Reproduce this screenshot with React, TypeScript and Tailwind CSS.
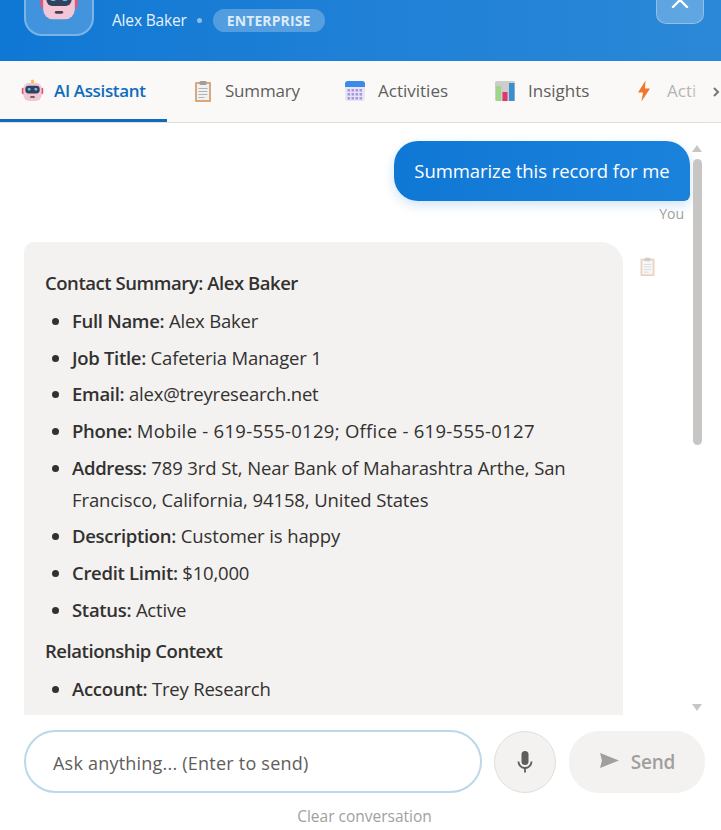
import React from "react";

const font = { fontFamily: '"Open Sans", "Noto Sans", sans-serif' };

function Robot({ size = 24 }: { size?: number }) {
  return (
    <svg width={size} height={size} viewBox="0 0 24 24">
      <rect x="11" y="1.5" width="2" height="3" fill="#c9a227" />
      <circle cx="12" cy="2" r="1.6" fill="#f5c542" />
      <rect x="0.8" y="9" width="3" height="7" rx="1.5" fill="#e0567a" />
      <rect x="20.2" y="9" width="3" height="7" rx="1.5" fill="#e0567a" />
      <rect x="2.5" y="4" width="19" height="19" rx="6" fill="#f3c6d6" />
      <rect x="4.5" y="7" width="15" height="8" rx="3.5" fill="#33415c" />
      <rect x="7" y="9.5" width="3" height="2.5" rx="1" fill="#58c7f3" />
      <rect x="14" y="9.5" width="3" height="2.5" rx="1" fill="#58c7f3" />
      <rect x="9.5" y="18" width="5" height="1.6" rx="0.8" fill="#4a3b52" />
    </svg>
  );
}

function Clipboard({ size = 22 }: { size?: number }) {
  return (
    <svg width={size} height={size} viewBox="0 0 22 22">
      <rect x="3" y="2" width="16" height="20" rx="1" fill="#d9a77c" />
      <rect x="5" y="4" width="12" height="16" fill="#f3f1ee" />
      <rect x="7.5" y="1" width="7" height="4" rx="1" fill="#a19f9d" />
      <rect x="6.5" y="8" width="9" height="1" fill="#a9b5c4" />
      <rect x="6.5" y="11" width="9" height="1" fill="#a9b5c4" />
      <rect x="6.5" y="14" width="9" height="1" fill="#a9b5c4" />
      <rect x="6.5" y="17" width="6" height="1" fill="#a9b5c4" />
    </svg>
  );
}

function Calendar() {
  const cells = [];
  for (let r = 0; r < 3; r++) {
    for (let c = 0; c < 4; c++) {
      cells.push(<rect key={`${r}-${c}`} x={3.5 + c * 4} y={9 + r * 4} width="2.6" height="2.6" fill="#a598dc" />);
    }
  }
  return (
    <svg width="22" height="22" viewBox="0 0 22 22">
      <rect x="1" y="1" width="20" height="20" rx="3" fill="#e9e5f6" />
      <path d="M1 7V4a3 3 0 0 1 3-3h14a3 3 0 0 1 3 3v3z" fill="#3b8ae6" />
      {cells}
    </svg>
  );
}

function Chart() {
  return (
    <svg width="22" height="22" viewBox="0 0 22 22">
      <rect x="1" y="1" width="20" height="20" rx="1.5" fill="#cfcdcb" />
      <rect x="2" y="6" width="5" height="15" fill="#9fd68a" />
      <rect x="8.5" y="12" width="5" height="9" fill="#e0356f" />
      <rect x="15" y="3" width="5.5" height="18" fill="#3a8fd0" />
    </svg>
  );
}

function Bolt() {
  return (
    <svg width="16" height="22" viewBox="0 0 16 22">
      <path d="M9.5 0.5 2 12.5h5L5.5 21.5 14 8.5H9z" fill="#f0782c" />
    </svg>
  );
}

function Tab({ icon, label, active, gap = "gap-3", w, muted, track = "" }: { icon: React.ReactNode; label: string; active?: boolean; gap?: string; w: string; muted?: boolean; track?: string }) {
  return (
    <div className={`${w} h-full shrink-0 flex items-center ${gap} ${active ? "border-b-[3px] border-[#0f6cbd] pt-[1px]" : "pb-[2px]"}`}>
      {icon}
      <span className={`text-[17px] whitespace-nowrap ${track} ${active ? "font-semibold text-[#0f6cbd]" : muted ? "text-[#b5b3b1]" : "text-[#605e5c]"}`}>{label}</span>
    </div>
  );
}

const rows1: [string, string, string][] = [
  ["Full Name:", "Alex Baker", ""],
  ["Job Title:", "Cafeteria Manager 1", ""],
  ["Email:", "alex@treyresearch.net", ""],
  ["Phone:", "Mobile - 619-555-0129; Office - 619-555-0127", "tracking-[0.28px]"],
  ["Address:", "789 3rd St, Near Bank of Maharashtra Arthe, San Francisco, California, 94158, United States", "tracking-[-0.1px]"],
  ["Description:", "Customer is happy", "tracking-[-0.1px]"],
  ["Credit Limit:", "$10,000", ""],
  ["Status:", "Active", ""],
];

function Li({ k, v, t = "" }: { k: string; v: string; t?: string }) {
  return (
    <li className="leading-[32px] mb-[4.7px] marker:text-[#323130]">
      <strong className="font-semibold tracking-[-0.3px]">{k}</strong> <span className={t}>{v}</span>
    </li>
  );
}

export default function App() {
  return (
    <div style={font} className="w-[721px] h-[830px] bg-white flex flex-col overflow-hidden">
      <header className="h-[61px] shrink-0 bg-gradient-to-r from-[#0f78d4] to-[#2b88d8] flex items-end justify-between pl-6 pr-[17px] overflow-hidden">
        <div className="flex items-center gap-[18px] mb-[25px]">
          <div className="w-[70px] h-[70px] shrink-0 rounded-[18px] bg-white/20 border-2 border-white/30 flex items-center justify-center">
            <Robot size={40} />
          </div>
          <div className="flex items-center gap-[10px] mt-[39px] text-white">
            <span className="text-[15.5px] text-[#e6f2fb] tracking-[-0.18px]">Alex Baker</span>
            <span className="w-[5px] h-[5px] rounded-full bg-white/50" />
            <span className="h-[23px] w-[112px] rounded-full bg-white/25 text-[14px] font-bold text-[#dcecf9] flex items-center justify-center ml-[1px] tracking-[0.1px]">ENTERPRISE</span>
          </div>
        </div>
        <div className="w-12 h-12 mb-[37px] rounded-[10px] bg-white/25 border border-white/30 flex items-center justify-center">
          <svg width="20" height="20" viewBox="0 0 20 20">
            <path d="M3 3l14 14M17 3L3 17" stroke="#fff" strokeWidth="2.4" strokeLinecap="round" />
          </svg>
        </div>
      </header>

      <nav className="h-[62px] shrink-0 bg-[#faf9f8] border-b border-[#e1dfdd] flex items-center pl-0 relative overflow-hidden">
        <Tab active w="w-[167px] pl-[21px]" gap="gap-[10px]" track="tracking-[-0.35px]" icon={<Robot size={23} />} label="AI Assistant" />
        <Tab w="w-[153px] pl-[25px]" gap="gap-[11px]" track="tracking-[-0.2px]" icon={<Clipboard />} label="Summary" />
        <Tab w="w-[149px] pl-[24px]" icon={<Calendar />} label="Activities" />
        <Tab w="w-[144px] pl-[25px]" icon={<Chart />} label="Insights" />
        <Tab w="w-[90px] pl-[23px]" gap="gap-[15px]" muted icon={<Bolt />} label="Acti" />
        <div className="absolute right-0 top-0 h-full w-[34px] flex items-center justify-end bg-gradient-to-r from-[#faf9f8]/0 to-[#faf9f8] pr-[1px]">
          <svg width="8" height="10" viewBox="0 0 8 10"><path d="M2 1l4 4-4 4" fill="none" stroke="#797775" strokeWidth="2" /></svg>
        </div>
      </nav>

      <main className="h-[592px] shrink-0 flex overflow-hidden">
        <div className="w-[692px] shrink-0 pl-6 pr-[2px] pt-[18px]">
          <div className="flex flex-col items-end">
            <div className="w-[296px] h-[60px] rounded-[24px] rounded-br-[6px] bg-gradient-to-r from-[#0f78d4] to-[#1b82dc] shadow-[0_4px_12px_rgba(15,120,212,0.2)] text-white text-[18.5px] flex items-center justify-center tracking-[-0.07px]">
              Summarize this record for me
            </div>
            <div className="text-[14px] text-[#a19f9d] mt-[3px] mr-[6px] leading-[20px]">You</div>
          </div>
          <div className="flex mt-[18px]">
            <div className="w-[599px] shrink-0 bg-[#f3f2f1] rounded-tl-[10px] rounded-tr-[22px] pl-[21px] pr-5 pt-[25px] text-[18.5px] text-[#323130] tracking-[-0.2px] h-[520px] overflow-hidden">
              <p className="font-semibold leading-[32px] mb-[6px] tracking-[-0.45px]">Contact Summary: Alex Baker</p>
              <ul className="list-disc pl-[27px]">
                {rows1.map(([k, v, t]) => <Li key={k} k={k} v={v} t={t} />)}
              </ul>
              <p className="font-semibold leading-[32px] mb-[6px] mt-[9px] tracking-[-0.45px]">Relationship Context</p>
              <ul className="list-disc pl-[27px]">
                <Li k="Account:" v="Trey Research" />
              </ul>
            </div>
            <div className="ml-[15px] mt-[15px] opacity-50"><Clipboard size={19} /></div>
          </div>
        </div>
        <div className="w-[12px] shrink-0 flex flex-col items-center pt-[22px] pb-[4px] ml-[-1px]">
          <svg width="10" height="7" viewBox="0 0 10 7"><path d="M5 0l5 7H0z" fill="#c8c6c4" /></svg>
          <div className="w-[9px] h-[286px] mt-[7px] rounded-full bg-[#c8c6c4]" />
          <div className="flex-1" />
          <svg width="10" height="7" viewBox="0 0 10 7"><path d="M0 0h10L5 7z" fill="#c8c6c4" /></svg>
        </div>
      </main>

      <div className="flex items-center pl-6 pr-4 mt-[15px]">
        <div className="w-[458px] h-[63px] shrink-0 rounded-full bg-white border-2 border-[#b9d8ea] pl-[27px] pt-[3px] flex items-center text-[18px] text-[#605e5c] tracking-[0.22px]">
          Ask anything... (Enter to send)
        </div>
        <div className="w-[62px] h-[62px] ml-3 shrink-0 rounded-full bg-[#f3f2f1] border border-[#e1dfdd] flex items-center justify-center">
          <svg width="18" height="24" viewBox="0 0 18 24" fill="#605e5c">
            <rect x="5.5" y="1" width="7" height="14" rx="3.5" />
            <path d="M2.5 11.5a6.5 6.5 0 0 0 13 0" fill="none" stroke="#605e5c" strokeWidth="1.8" />
            <rect x="8.1" y="17.5" width="1.8" height="5" />
          </svg>
        </div>
        <div className="w-[136px] h-[62px] ml-[13px] shrink-0 rounded-[30px] bg-[#f3f2f1] flex items-center justify-center gap-[11px] text-[#a19f9d] text-[19px] font-semibold tracking-[-0.2px]">
          <svg width="21" height="17" viewBox="0 0 22 18" className="mb-[2px]"><path d="M1 1l20 8-20 8 2-8z" fill="#a19f9d" /></svg>
          <span className="pt-[2px]">Send</span>
        </div>
      </div>

      <div className="text-center text-[15.5px] text-[#a19f9d] mt-[12px] pl-[8px] leading-[22px]">Clear conversation</div>
    </div>
  );
}
